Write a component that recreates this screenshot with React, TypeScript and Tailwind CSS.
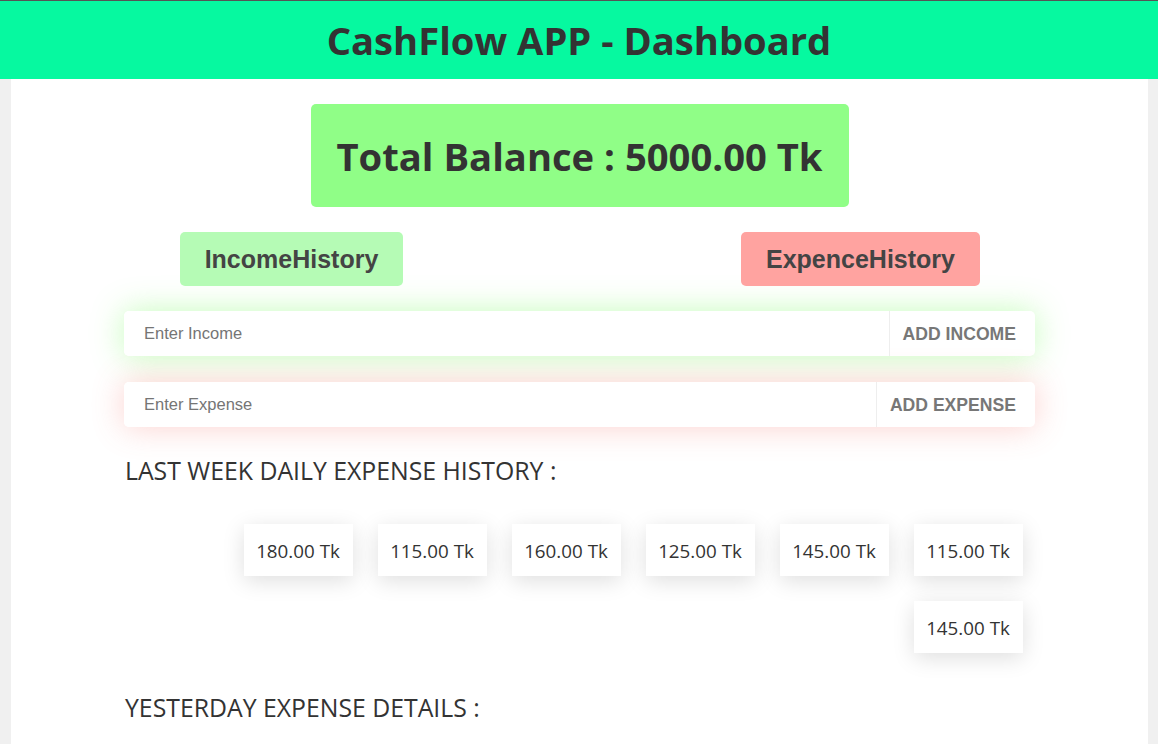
const WEEK_EXPENSES = ['180.00', '115.00', '160.00', '125.00', '145.00', '115.00', '145.00']

export default function App() {
  return (
    <div className="min-h-[744px] bg-[#f0f0f0] font-['Open_Sans',sans-serif] text-[#333]">
      <header className="flex h-[79px] items-center justify-center border-t border-[#555] bg-[#06f9a0]">
        <h1 className="text-[38.2px] font-bold leading-none">CashFlow APP - Dashboard</h1>
      </header>

      <main className="ml-[11px] mr-[10px] bg-white pb-10 pt-[25px]">
        <div className="flex justify-center">
          <div className="flex h-[103px] w-[538px] items-center justify-center rounded-[5px] bg-[#90fe87] pt-[2px]">
            <h2 className="text-[38.2px] font-bold leading-none">Total Balance : 5000.00 Tk</h2>
          </div>
        </div>

        <div className="mt-[25px] flex justify-between pl-[169px] pr-[168px] font-['Liberation_Sans',sans-serif]">
          <button className="h-[54px] w-[223px] rounded-[5px] bg-[#b5fbb5] pt-[2px] text-[25px] font-bold text-[#444]">
            IncomeHistory
          </button>
          <button className="h-[54px] w-[239px] rounded-[5px] bg-[#ffa3a0] pt-[2px] text-[25px] font-bold text-[#444]">
            ExpenceHistory
          </button>
        </div>

        <div className="mx-[113px] mt-[25px] space-y-[26px] font-['Liberation_Sans',sans-serif]">
          <EntryRow placeholder="Enter Income" label="ADD INCOME" glow="shadow-[0_0_32px_rgba(90,250,60,0.35)]" />
          <EntryRow placeholder="Enter Expense" label="ADD EXPENSE" glow="shadow-[0_0_32px_rgba(245,100,90,0.3)]" />
        </div>

        <section className="mx-[113px] mt-[28px]">
          <h3 className="pl-[1px] text-[24.8px] leading-[30px]">LAST WEEK DAILY EXPENSE HISTORY :</h3>
          <div className="mt-[26px] flex flex-wrap justify-end">
            {WEEK_EXPENSES.map((amount, index) => (
              <div
                key={index}
                className="m-[12.5px] flex h-[52px] w-[109px] items-center justify-center bg-white pt-[3px] text-[18.8px] shadow-[0_5px_22px_rgba(0,0,0,0.13)]"
              >
                {amount} Tk
              </div>
            ))}
          </div>
        </section>

        <section className="mx-[113px] mt-[27px]">
          <h3 className="pl-[1px] text-[24.8px] leading-[30px]">YESTERDAY EXPENSE DETAILS :</h3>
        </section>
      </main>
    </div>
  )
}

function EntryRow({ placeholder, label, glow }: any) {
  return (
    <div className={`flex h-[45px] overflow-hidden rounded-[5px] bg-white ${glow}`}>
      <input
        type="text"
        placeholder={placeholder}
        className="min-w-0 flex-1 bg-white px-5 text-[16.5px] text-[#333] outline-none placeholder:text-[#757575]"
      />
      <button className="border-l border-[#eee] pl-[13px] pr-[19px] pt-[1px] text-[17.6px] font-bold text-[#777]">{label}</button>
    </div>
  )
}
